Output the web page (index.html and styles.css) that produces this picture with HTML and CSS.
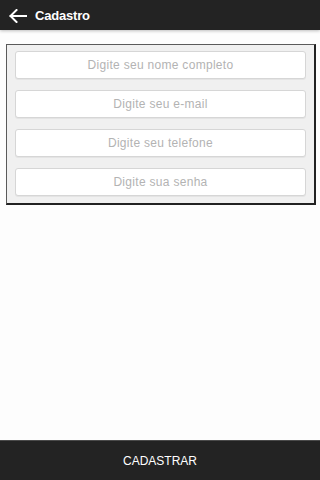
FILE: index.html
```html
<!DOCTYPE html>
<html lang="pt">
<head>
<meta charset="utf-8">
<title>Cadastro</title>
<link rel="stylesheet" href="styles.css">
</head>
<body>
<div class="app">
  <header class="topbar">
    <svg class="back" width="18" height="14" viewBox="0 0 18 14" aria-hidden="true">
      <path d="M1.5 7 H17.5 M7.5 1 L1.5 7 L7.5 13" fill="none" stroke="#fff" stroke-width="2" stroke-linecap="square" stroke-linejoin="miter"/>
    </svg>
    <span class="title">Cadastro</span>
  </header>
  <main class="content">
    <form class="card">
      <input class="field" type="text" placeholder="Digite seu nome completo">
      <input class="field" type="email" placeholder="Digite seu e-mail">
      <input class="field" type="tel" placeholder="Digite seu telefone">
      <input class="field" type="password" placeholder="Digite sua senha">
    </form>
  </main>
  <footer class="bottombar">
    <span class="action">CADASTRAR</span>
  </footer>
</div>
</body>
</html>
```
FILE: styles.css
```css
html, body {
  margin: 0;
  padding: 0;
  background: #fdfdfd;
  font-family: "Liberation Sans", Arial, sans-serif;
}
.app {
  width: 320px;
  height: 480px;
  display: flex;
  flex-direction: column;
}
.topbar {
  height: 30px;
  flex: 0 0 30px;
  background: #232323;
  display: flex;
  align-items: center;
  box-shadow: 0 1px 3px rgba(0,0,0,0.25);
  position: relative;
  z-index: 1;
}
.back {
  margin-left: 9px;
  margin-top: 1px;
}
.title {
  margin-left: 8px;
  color: #fff;
  font-size: 13px;
  font-weight: bold;
  letter-spacing: -0.2px;
}
.content {
  flex: 1;
  padding-top: 14px;
}
.card {
  margin: 0 4px 0 6px;
  background: #f0f0f0;
  border-top: 1px solid #5a5a5a;
  border-left: 1px solid #5a5a5a;
  border-right: 2px solid #222;
  border-bottom: 2px solid #222;
  padding: 6px 8px 7px 8px;
  display: flex;
  flex-direction: column;
  gap: 11px;
}
.field {
  box-sizing: border-box;
  height: 28px;
  width: 100%;
  margin: 0;
  border: 1px solid #d6d6d6;
  border-radius: 3px;
  background: #fff;
  box-shadow: 0 1px 0 #e4e4e4;
  text-align: center;
  font-family: "Liberation Sans", Arial, sans-serif;
  font-size: 12px;
  letter-spacing: 0.3px;
  color: #555;
  outline: none;
  padding: 0 6px;
}
.field::placeholder {
  color: #b3b3b3;
  opacity: 1;
}
.bottombar {
  flex: 0 0 39px;
  background: #232323;
  border-top: 1px solid #4a4a4a;
  display: flex;
  align-items: center;
  justify-content: center;
}
.action {
  color: #fff;
  font-size: 12px;
  margin-top: 1px;
}
```
